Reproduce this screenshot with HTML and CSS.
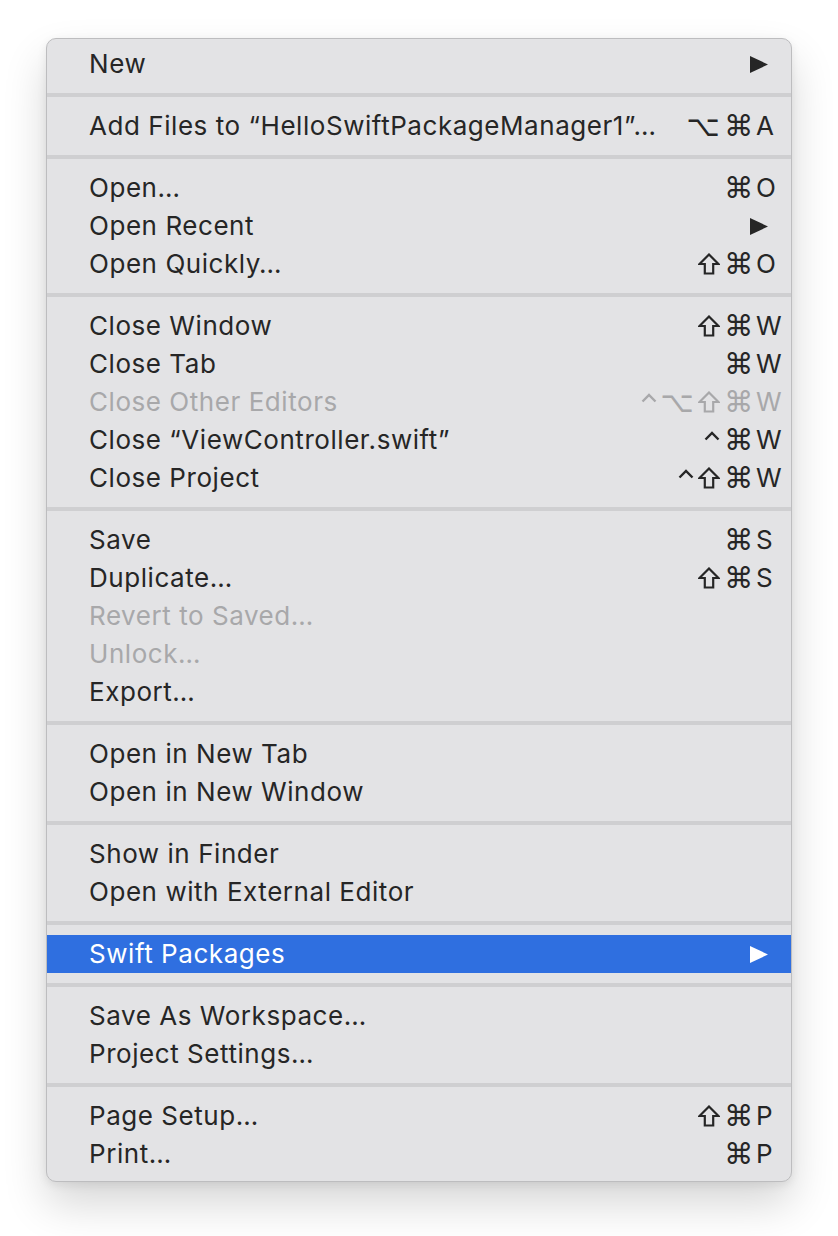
FILE: index.html
```html
<!DOCTYPE html>
<html>
<head>
<meta charset="utf-8">
<link rel="stylesheet" href="styles.css">
</head>
<body>
<svg width="0" height="0" class="defs">
  <defs>
    <symbol id="shift" viewBox="0 0 22 22"><path d="M11 1.5 L20.5 11 H15.2 V20.5 H6.8 V11 H1.5 Z" fill="none" stroke="currentColor" stroke-width="2.2" stroke-linejoin="miter"/></symbol>
    <symbol id="ctrl" viewBox="0 0 16 22"><path d="M1.5 10.5 L8 4 L14.5 10.5" fill="none" stroke="currentColor" stroke-width="2.4"/></symbol>
  </defs>
</svg>
<div class="menu">
  <div class="row"><span class="label">New</span><svg class="arrow" viewBox="0 0 18 17"><polygon points="0,0 18,8.5 0,17"/></svg></div>
  <div class="sep"></div>
  <div class="row"><span class="label">Add Files to “HelloSwiftPackageManager1”…</span><span class="sc"><span class="mods"><span class="g">⌥</span><span class="g">⌘</span></span><span class="key">A</span></span></div>
  <div class="sep"></div>
  <div class="row"><span class="label">Open…</span><span class="sc"><span class="mods"><span class="g">⌘</span></span><span class="key">O</span></span></div>
  <div class="row"><span class="label">Open Recent</span><svg class="arrow" viewBox="0 0 18 17"><polygon points="0,0 18,8.5 0,17"/></svg></div>
  <div class="row"><span class="label">Open Quickly…</span><span class="sc"><span class="mods"><svg class="shift"><use href="#shift"/></svg><span class="g">⌘</span></span><span class="key">O</span></span></div>
  <div class="sep"></div>
  <div class="row"><span class="label">Close Window</span><span class="sc"><span class="mods"><svg class="shift"><use href="#shift"/></svg><span class="g">⌘</span></span><span class="key">W</span></span></div>
  <div class="row"><span class="label">Close Tab</span><span class="sc"><span class="mods"><span class="g">⌘</span></span><span class="key">W</span></span></div>
  <div class="row disabled"><span class="label">Close Other Editors</span><span class="sc"><span class="mods"><svg class="ctrl"><use href="#ctrl"/></svg><span class="g">⌥</span><svg class="shift"><use href="#shift"/></svg><span class="g">⌘</span></span><span class="key">W</span></span></div>
  <div class="row"><span class="label">Close “ViewController.swift”</span><span class="sc"><span class="mods"><svg class="ctrl"><use href="#ctrl"/></svg><span class="g">⌘</span></span><span class="key">W</span></span></div>
  <div class="row"><span class="label">Close Project</span><span class="sc"><span class="mods"><svg class="ctrl"><use href="#ctrl"/></svg><svg class="shift"><use href="#shift"/></svg><span class="g">⌘</span></span><span class="key">W</span></span></div>
  <div class="sep"></div>
  <div class="row"><span class="label">Save</span><span class="sc"><span class="mods"><span class="g">⌘</span></span><span class="key">S</span></span></div>
  <div class="row"><span class="label">Duplicate…</span><span class="sc"><span class="mods"><svg class="shift"><use href="#shift"/></svg><span class="g">⌘</span></span><span class="key">S</span></span></div>
  <div class="row disabled"><span class="label">Revert to Saved…</span></div>
  <div class="row disabled"><span class="label">Unlock…</span></div>
  <div class="row"><span class="label">Export…</span></div>
  <div class="sep"></div>
  <div class="row"><span class="label">Open in New Tab</span></div>
  <div class="row"><span class="label">Open in New Window</span></div>
  <div class="sep"></div>
  <div class="row"><span class="label">Show in Finder</span></div>
  <div class="row"><span class="label">Open with External Editor</span></div>
  <div class="sep"></div>
  <div class="row selected"><span class="label">Swift Packages</span><svg class="arrow" viewBox="0 0 18 17"><polygon points="0,0 18,8.5 0,17"/></svg></div>
  <div class="sep"></div>
  <div class="row"><span class="label">Save As Workspace…</span></div>
  <div class="row"><span class="label">Project Settings…</span></div>
  <div class="sep"></div>
  <div class="row"><span class="label">Page Setup…</span><span class="sc"><span class="mods"><svg class="shift"><use href="#shift"/></svg><span class="g">⌘</span></span><span class="key">P</span></span></div>
  <div class="row"><span class="label">Print…</span><span class="sc"><span class="mods"><span class="g">⌘</span></span><span class="key">P</span></span></div>
</div>
</body>
</html>
```
FILE: styles.css
```css
html, body {
  margin: 0;
  padding: 0;
  background: #ffffff;
}
body {
  padding: 38px 0 0 46px;
  min-height: 1236px;
  box-sizing: border-box;
  font-family: Inter, "Noto Sans", sans-serif;
}
.defs {
  position: absolute;
  width: 0;
  height: 0;
}
.menu {
  width: 744px;
  background: #e3e3e5;
  border: 1px solid #bdbdbf;
  border-radius: 10px;
  padding: 6px 0 8px 0;
  box-shadow: 0 22px 44px rgba(0, 0, 0, 0.16), 0 3px 10px rgba(0, 0, 0, 0.08);
  color: #262626;
}
.row {
  height: 38px;
  display: flex;
  align-items: center;
  padding: 0 8px 0 42px;
  font-size: 26px;
  letter-spacing: 0.55px;
  line-height: 38px;
}
.label {
  flex: 1;
  white-space: nowrap;
}
.disabled {
  color: #a8a8aa;
}
.selected {
  background: #2f6fe0;
  color: #ffffff;
}
.sep {
  height: 4px;
  background: #cfcfd1;
  margin: 10px 0;
}
.sc {
  display: flex;
  align-items: center;
}
.mods {
  display: flex;
  align-items: center;
  gap: 4px;
  font-family: "DejaVu Sans", sans-serif;
  font-size: 29px;
  letter-spacing: 0;
}
.g {
  display: block;
  line-height: 38px;
}
.shift {
  width: 22px;
  height: 22px;
  margin-top: -1px;
}
.ctrl {
  width: 16px;
  height: 22px;
  margin-top: -1px;
}
.key {
  width: 30px;
  padding-left: 3px;
  letter-spacing: 0;
  box-sizing: border-box;
}
.arrow {
  width: 18px;
  height: 17px;
  margin-right: 15px;
  fill: #262626;
}
.selected .arrow {
  fill: #ffffff;
}
```
